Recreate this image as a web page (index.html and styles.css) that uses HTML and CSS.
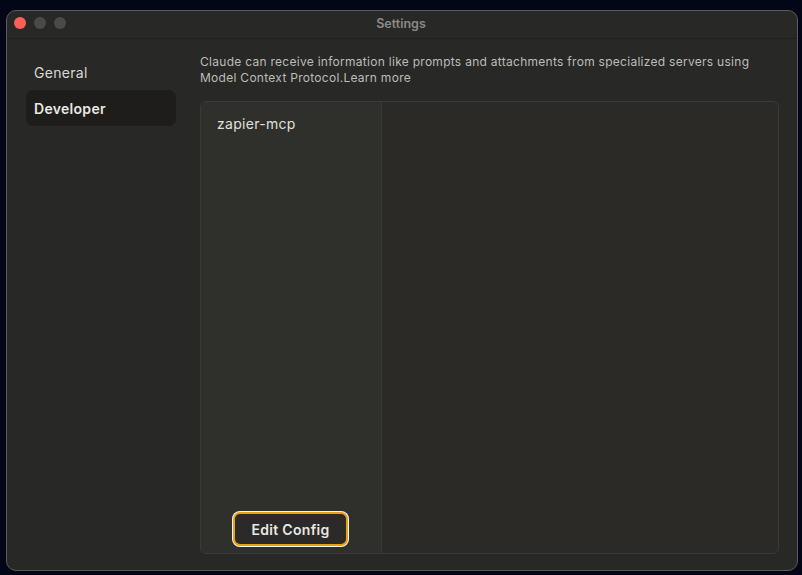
FILE: index.html
```html
<!DOCTYPE html>
<html>
<head>
<meta charset="utf-8">
<link rel="stylesheet" href="styles.css">
</head>
<body>
<div class="window">
  <div class="titlebar">
    <div class="lights">
      <span class="light red"></span>
      <span class="light gray"></span>
      <span class="light gray"></span>
    </div>
    <div class="title">Settings</div>
  </div>
  <div class="main">
    <nav class="sidebar">
      <div class="nav-item">General</div>
      <div class="nav-item active">Developer</div>
    </nav>
    <section class="content">
      <p class="desc">Claude can receive information like prompts and attachments from specialized servers using Model Context Protocol.<span class="link">Learn more</span></p>
      <div class="panel">
        <div class="server-list">
          <div class="server">zapier-mcp</div>
          <div class="list-footer">
            <button class="btn">Edit Config</button>
          </div>
        </div>
        <div class="detail"></div>
      </div>
    </section>
  </div>
</div>
</body>
</html>
```

FILE: styles.css
```css
html, body {
  margin: 0;
  padding: 0;
  background: #030616;
  width: 802px;
  height: 575px;
  overflow: hidden;
  font-family: "Inter", "Lato", sans-serif;
}
.window {
  box-sizing: border-box;
  margin: 10px 0 0 6px;
  width: 792px;
  height: 561px;
  background: #282826;
  border: 1px solid #5b5b59;
  border-radius: 10px;
  display: flex;
  flex-direction: column;
  overflow: hidden;
}
.titlebar {
  height: 27px;
  flex: none;
  border-bottom: 1px solid #1f1f1d;
  display: flex;
  align-items: center;
  justify-content: center;
  position: relative;
}
.lights {
  position: absolute;
  left: 7px;
  top: 6px;
  display: flex;
  gap: 8px;
}
.light {
  width: 12px;
  height: 12px;
  border-radius: 50%;
  display: block;
}
.red { background: #fe5f57; }
.gray { background: #4a4a48; }
.title {
  font-size: 12.5px;
  font-weight: 600;
  color: #8a8a88;
  margin-left: -2px;
  margin-top: -2px;
}
.main {
  flex: 1;
  display: flex;
  padding: 15px 18px 16px 19px;
  gap: 24px;
  min-height: 0;
}
.sidebar {
  width: 150px;
  flex: none;
  display: flex;
  flex-direction: column;
}
.nav-item {
  height: 36px;
  display: flex;
  align-items: center;
  padding: 0 8px;
  font-size: 14px;
  color: #d8d8d4;
  border-radius: 7px;
  letter-spacing: 0.3px;
}
.nav-item.active {
  background: #1e1d1b;
  font-weight: 600;
  color: #e8e8e4;
}
.content {
  flex: 1;
  display: flex;
  flex-direction: column;
  min-width: 0;
}
.desc {
  margin: 0 0 15px 0;
  font-size: 12px;
  line-height: 16px;
  color: #bdbdb8;
  letter-spacing: 0.28px;
  padding-right: 20px;
}
.panel {
  flex: 1;
  display: flex;
  border: 1px solid #3a3a36;
  border-radius: 6px;
  overflow: hidden;
  background: #2b2a27;
}
.server-list {
  width: 180px;
  flex: none;
  background: #2f2f2b;
  border-right: 1px solid #363632;
  display: flex;
  flex-direction: column;
}
.server {
  padding: 14px 16px;
  font-size: 14px;
  line-height: 16px;
  color: #e0e0dc;
  letter-spacing: 0.3px;
}
.list-footer {
  margin-top: auto;
  display: flex;
  justify-content: center;
  padding-bottom: 7px;
}
.btn {
  box-sizing: border-box;
  width: 115px;
  height: 34px;
  background: #2b2a28;
  border: 2px solid #e8a010;
  border-radius: 7px;
  box-shadow: 0 0 0 1px #f4f4f0;
  color: #e8e8e4;
  font-family: inherit;
  font-size: 14px;
  font-weight: 600;
  letter-spacing: 0.3px;
  margin-left: -1px;
}
.detail {
  flex: 1;
}
```
